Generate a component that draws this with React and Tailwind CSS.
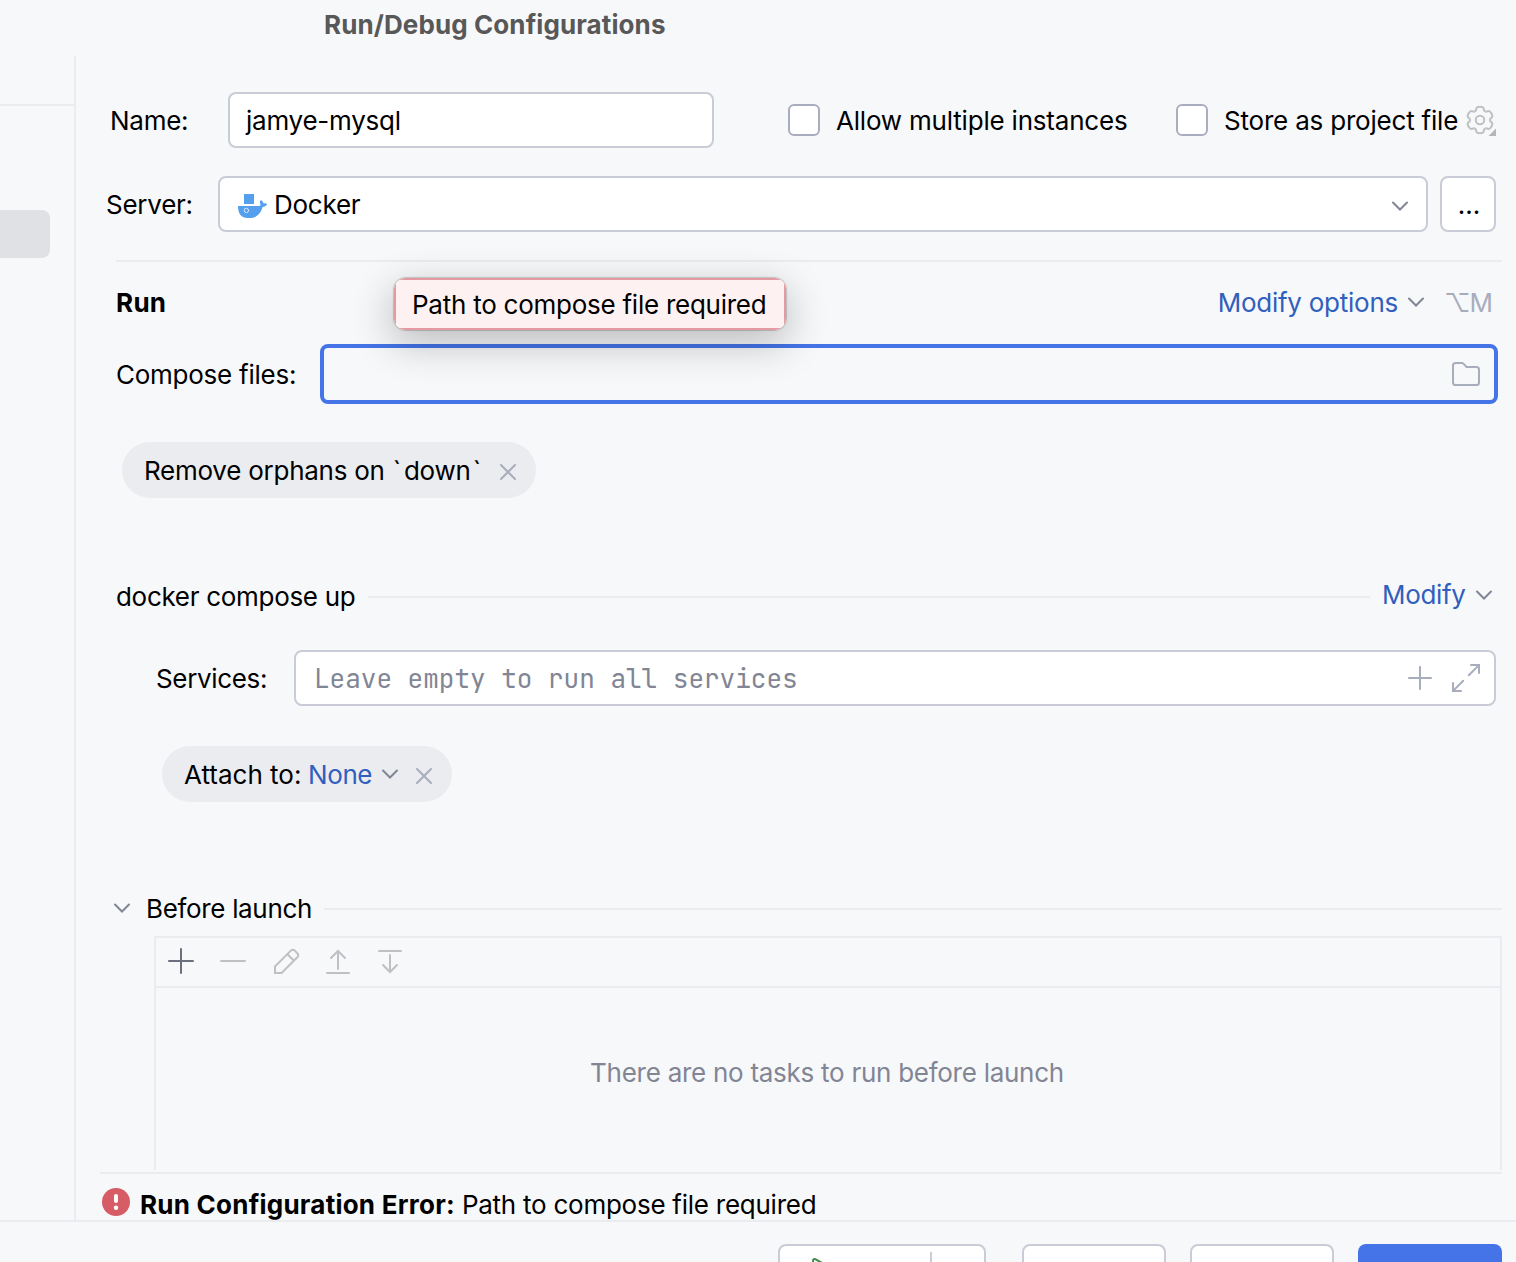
import React from "react";

function Icon({ size = 32, box = 16, className = "", children, stroke = "#6C707E" }) {
  return (
    <svg
      width={size}
      height={size}
      viewBox={`0 0 ${box} ${box}`}
      fill="none"
      stroke={stroke}
      strokeLinecap="round"
      className={`block shrink-0 ${className}`}
    >
      {children}
    </svg>
  );
}

const Chevron = ({ className = "", stroke = "#818594" }) => (
  <Icon className={className} stroke={stroke}>
    <path d="M11.5 6.25L8 9.75L4.5 6.25" />
  </Icon>
);

const Close = ({ className = "" }) => (
  <Icon className={className} stroke="#A8ADBD">
    <path d="M4.5 4.5L11.5 11.5M11.5 4.5L4.5 11.5" />
  </Icon>
);

function gearPath() {
  const pts = [];
  for (let k = 0; k < 6; k++) {
    const a = k * 60 - 90;
    pts.push([a - 15, 13.7], [a + 15, 13.7], [a + 23, 10], [a + 37, 10]);
  }
  const xy = pts.map(([a, r]) => {
    const t = (a * Math.PI) / 180;
    return [16 + r * Math.cos(t), 16 + r * Math.sin(t)];
  });
  let d = "";
  xy.forEach((p, i) => {
    const prev = xy[(i + xy.length - 1) % xy.length];
    const next = xy[(i + 1) % xy.length];
    const f = 0.5;
    const a = [p[0] + (prev[0] - p[0]) * f, p[1] + (prev[1] - p[1]) * f];
    const b = [p[0] + (next[0] - p[0]) * f, p[1] + (next[1] - p[1]) * f];
    d += `${i ? "L" : "M"}${a[0].toFixed(2)} ${a[1].toFixed(2)}Q${p[0].toFixed(2)} ${p[1].toFixed(2)} ${b[0].toFixed(2)} ${b[1].toFixed(2)}`;
  });
  return d + "Z";
}

const Gear = () => (
  <Icon box={32} stroke="#BFC0C3">
    <path d={gearPath()} strokeWidth="2" />
    <circle cx="16" cy="16" r="4.2" strokeWidth="2" />
    <path d="M32 24.5V32H24.5Z" fill="#B5B6B8" stroke="none" />
  </Icon>
);

const Docker = () => (
  <Icon box={32} stroke="none" className="mt-1">
    <path d="M8 4H18V14H8Z" fill="#549FEE" />
    <path
      d="M2 16H23.5C24.6 15.6 24.7 14.8 24.2 13.6C23.7 12.3 23.9 11 24.9 10C26.4 10.9 27.2 12 27.4 13.3C28.8 13.1 30 13.2 31.2 13.9C30.2 15.9 28.6 16.9 26.6 16.9C24.6 23.8 20.4 28 13.4 28H11.6C5.4 28 2 24 2 16Z"
      fill="#549FEE"
    />
    <circle cx="10.4" cy="20.4" r="2.2" stroke="#D6E9FC" strokeWidth="1" />
  </Icon>
);

const Field = ({ className = "", children }) => (
  <div className={`flex h-14 items-center rounded-lg border-2 border-[#C9CCD6] bg-white ${className}`}>{children}</div>
);

const Checkbox = () => <span className="size-8 shrink-0 rounded-md border-2 border-[#A9ADBE] bg-white" />;

const Rule = ({ className = "" }) => <div className={`h-0.5 bg-[#EBECF0] ${className}`} />;

export default function App() {
  return (
    <div
      className={
        "flex h-[1262px] w-[1516px] flex-col overflow-hidden bg-[#F7F8FA] whitespace-nowrap text-[26px] leading-8 tracking-[-0.25px] text-black [font-family:Inter,sans-serif] [font-optical-sizing:none]"
      }
    >
      <header className="h-14 shrink-0 pt-[9px] pl-[324px] font-bold tracking-[0.1px] text-[#585858]">
        Run/Debug Configurations
      </header>

      <div className="flex h-[1164px] shrink-0">
        <aside className="w-[76px] shrink-0 border-r-2 border-[#EBECF0] pt-12">
          <Rule />
          <div className="mt-[104px] h-12 w-[50px] rounded-r-lg bg-[#DFE1E5]" />
        </aside>

        <main className="flex min-w-0 flex-1 flex-col">
          <div className="mt-9 flex h-14 items-center">
            <label className="ml-[34px] w-[118px] pt-0.5">Name:</label>
            <Field className="w-[486px] pl-4">
              <span className="pt-0.5">jamye-mysql</span>
            </Field>
            <label className="ml-[74px] flex w-[388px] items-center gap-4">
              <Checkbox />
              <span className="pt-0.5 tracking-[-0.2px]">Allow multiple instances</span>
            </label>
            <label className="flex w-[288px] items-center gap-4">
              <Checkbox />
              <span className="pt-0.5 tracking-[-0.2px]">Store as project file</span>
            </label>
            <Gear />
          </div>

          <div className="mt-7 flex h-14 items-center">
            <label className="ml-[30px] w-[112px] pt-0.5">Server:</label>
            <Field className="w-[1210px] pl-4">
              <Docker />
              <span className="ml-1.5 flex-1 pt-0.5">Docker</span>
              <Chevron className="mr-2.5 mt-1" />
            </Field>
            <button className="ml-3 flex size-14 items-center justify-center rounded-lg border-2 border-[#C9CCD6] bg-white pt-0.5 pl-0.5 tracking-normal">
              ...
            </button>
          </div>

          <Rule className="mt-7 mr-3.5 ml-10" />

          <div className="relative mt-[25px] flex h-8 items-center pl-10">
            <h2 className="font-bold tracking-[0.3px]">Run</h2>
            <span className="mr-0.5 ml-auto text-[#315FBD]">Modify options</span>
            <Chevron className="mb-0.5" />
            <span className="mr-6 ml-3 w-12 tracking-[-1px] text-[#A8ADBD]">⌥M</span>
            <div className="absolute top-[-9px] left-[318px] z-10 h-[52px] w-[392px] rounded-xl shadow-[0_0_1px_1px_rgba(0,0,0,0.18),0_12px_40px_2px_rgba(0,0,0,0.24)]">
              <div className="h-full overflow-hidden rounded-xl">
                <div className="flex h-full items-center border-2 border-[#E59AA1] bg-[#FDF2F1] pt-0.5 pl-4">
                  Path to compose file required
                </div>
              </div>
            </div>
          </div>

          <div className="mt-[25px] flex h-[60px] items-center">
            <label className="ml-10 w-[204px] pt-0.5">Compose files:</label>
            <div className="flex h-[60px] w-[1178px] items-center justify-end rounded-lg border-4 border-[#4574E8] pr-3">
              <Icon stroke="#A8ADBD">
                <path d="M8.1 4.3L8.25 4.5H13.2C13.9 4.5 14.5 5.1 14.5 5.8V12.2C14.5 12.9 13.9 13.5 13.2 13.5H2.8C2.1 13.5 1.5 12.9 1.5 12.2V3.8C1.5 3.1 2.1 2.5 2.8 2.5H5.9C6.2 2.5 6.5 2.6 6.7 2.8Z" />
              </Icon>
            </div>
          </div>

          <div className="mt-[38px] ml-[46px] flex h-14 w-[414px] items-center rounded-full bg-[#EBECF0] pl-[22px]">
            <span className="flex-1 pt-0.5">
              Remove orphans on <span className="mr-[3px] ml-px">`</span>down<span className="ml-0.5">`</span>
            </span>
            <Close className="mt-1 mr-3" />
          </div>

          <div className="mt-[83px] flex h-8 items-center pl-10">
            <span className="w-[252px] tracking-[-0.3px]">docker compose up</span>
            <Rule className="w-[1002px]" />
            <span className="mb-1 ml-3 tracking-[-0.35px] text-[#315FBD]">Modify</span>
            <Chevron className="mr-4 mb-[5px] ml-auto" />
          </div>

          <div className="mt-[37px] flex h-14 items-center">
            <label className="ml-20 w-[138px] pt-0.5 tracking-[-0.35px]">Services:</label>
            <Field className="w-[1202px] pl-[18px]">
              <span className="flex-1 pt-0.5 tracking-normal text-[#818594] [font-family:'JetBrains_Mono','DejaVu_Sans_Mono',monospace]">
                Leave empty to run all services
              </span>
              <Icon stroke="#A8ADBD">
                <path d="M8 2.5V13.5M2.5 8H13.5" />
              </Icon>
              <Icon stroke="#A8ADBD" className="mr-3 ml-3.5">
                <path d="M10.5 1.5H14.5V5.5M14.2 1.8L9.4 6.6M5.5 14.5H1.5V10.5M1.8 14.2L6.6 9.4" />
              </Icon>
            </Field>
          </div>

          <div className="mt-10 ml-[86px] flex h-14 w-[290px] items-center rounded-full bg-[#EBECF0] pl-[22px]">
            <span className="w-[124px] pt-0.5 tracking-normal">Attach to:</span>
            <span className="w-[66px] pt-0.5 tracking-[-0.4px] text-[#315FBD]">None</span>
            <Chevron />
            <Close className="mt-1 mr-3 ml-auto" />
          </div>

          <div className="mt-[91px] flex h-8 items-center">
            <Chevron className="mb-0.5 ml-[30px]" />
            <span className="ml-2 w-[178px] tracking-[-0.33px]">Before launch</span>
            <Rule className="w-[1178px]" />
          </div>

          <section className="mt-[11px] mr-3.5 ml-[78px] flex h-[234px] flex-col border-2 border-b-0 border-[#EBECF0]">
            <div className="flex h-[50px] items-center gap-5 border-b-2 border-[#EBECF0] pb-0.5 pl-[9px]">
              <Icon>
                <path d="M8 2V14M2 8H14" />
              </Icon>
              <Icon stroke="#BFC0C3">
                <path d="M2 8H14" />
              </Icon>
              <Icon stroke="#BFC0C3" box={32} className="ml-px">
                <path
                  d="M5 28V21.5L20.6 5.9C22 4.5 23.6 4.5 25 5.9L27.3 8.2C28.6 9.5 28.6 11 27.3 12.3L11.6 28ZM17.4 9.2L24 15.8"
                  strokeWidth="2"
                />
              </Icon>
              <Icon stroke="#BFC0C3" box={32}>
                <path d="M5 28H27M16 24V6M9 13L16 6L23 13" strokeWidth="2" />
              </Icon>
              <Icon stroke="#BFC0C3" box={32}>
                <path d="M5 6H27M16 10V27M9 20L16 27L23 20" strokeWidth="2" />
              </Icon>
            </div>
            <p className="mt-[69px] pr-0.5 text-center tracking-[-0.27px] text-[#818594]">
              There are no tasks to run before launch
            </p>
          </section>

          <Rule className="mt-0.5 mr-3.5 ml-6" />

          <div className="mt-3.5 flex h-8 items-center pl-[26px]">
            <svg width="28" height="28" viewBox="0 0 28 28" className="mb-1 shrink-0">
              <circle cx="14" cy="14" r="14" fill="#D65D66" />
              <rect x="12" y="6" width="4" height="9" rx="2" fill="white" />
              <circle cx="14" cy="19.8" r="2.2" fill="white" />
            </svg>
            <span className="ml-2.5 pt-0.5 font-bold tracking-[0.24px]">Run Configuration Error:</span>
            <span className="ml-[7px] pt-0.5">Path to compose file required</span>
          </div>
        </main>
      </div>

      <footer className="flex h-[42px] shrink-0 items-start border-t-2 border-[#EBECF0] pt-[22px] pl-[778px]">
        <div className="flex h-14 w-[208px] rounded-lg border-2 border-[#C9CCD6] bg-white">
          <Icon className="mt-1.5 ml-[26px]" stroke="#3C8A45" box={32}>
            <path d="M7 27V9C7 7.2 8.4 6.6 9.7 7.3L25 16L9.7 25Z" strokeWidth="2" />
          </Icon>
          <span className="mt-1.5 ml-[92px] h-10 w-0.5 bg-[#C9CCD6]" />
        </div>
        <div className="ml-9 h-14 w-36 rounded-lg border-2 border-[#C9CCD6] bg-white" />
        <div className="ml-6 h-14 w-36 rounded-lg border-2 border-[#C9CCD6] bg-white" />
        <div className="ml-6 h-14 w-36 rounded-lg bg-[#4574E8]" />
      </footer>
    </div>
  );
}
